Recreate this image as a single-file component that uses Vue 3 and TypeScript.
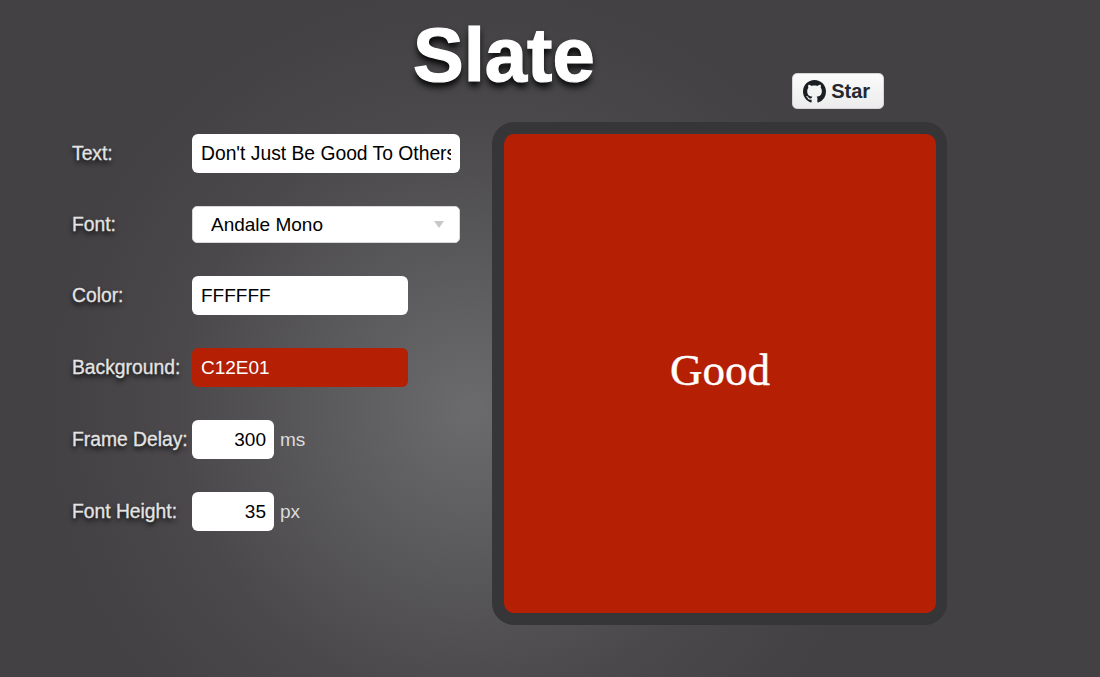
<script setup lang="ts">
import { ref } from 'vue'

const text = ref("Don't Just Be Good To Others")
const font = ref('Andale Mono')
const color = ref('FFFFFF')
const background = ref('C12E01')
const delay = ref(300)
const fontHeight = ref(35)
</script>

<template>
  <div class="page">
    <header class="top">
      <h1 class="title">Slate</h1>
      <a class="star" href="#">
        <svg class="mark" viewBox="0 0 16 16" aria-hidden="true">
          <path fill="#1b1f23" d="M8 0C3.58 0 0 3.58 0 8c0 3.54 2.29 6.53 5.47 7.59.4.07.55-.17.55-.38 0-.19-.01-.82-.01-1.49-2.01.37-2.53-.49-2.69-.94-.09-.23-.48-.94-.82-1.13-.28-.15-.68-.52-.01-.53.63-.01 1.08.58 1.23.82.72 1.21 1.87.87 2.33.66.07-.52.28-.87.51-1.07-1.78-.2-3.64-.89-3.64-3.95 0-.87.31-1.59.82-2.15-.08-.2-.36-1.02.08-2.12 0 0 .67-.21 2.2.82.64-.18 1.32-.27 2-.27.68 0 1.36.09 2 .27 1.53-1.04 2.2-.82 2.2-.82.44 1.1.16 1.92.08 2.12.51.56.82 1.27.82 2.15 0 3.07-1.87 3.75-3.65 3.95.29.25.54.73.54 1.48 0 1.07-.01 1.93-.01 2.2 0 .21.15.46.55.38A8.013 8.013 0 0016 8c0-4.42-3.58-8-8-8z" />
        </svg>
        <span>Star</span>
      </a>
    </header>

    <main class="content">
      <form class="form" @submit.prevent>
        <div class="row">
          <label class="label" for="f-text">Text:</label>
          <input id="f-text" v-model="text" class="field wide" type="text" />
        </div>
        <div class="row">
          <label class="label" for="f-font">Font:</label>
          <div class="select-wrap">
            <select id="f-font" v-model="font" class="select">
              <option>Andale Mono</option>
            </select>
          </div>
        </div>
        <div class="row">
          <label class="label" for="f-color">Color:</label>
          <input id="f-color" v-model="color" class="field medium" type="text" />
        </div>
        <div class="row">
          <label class="label" for="f-bg">Background:</label>
          <input id="f-bg" v-model="background" class="field medium swatch" type="text" />
        </div>
        <div class="row">
          <label class="label" for="f-delay">Frame Delay:</label>
          <input id="f-delay" v-model="delay" class="field small" type="text" />
          <span class="unit">ms</span>
        </div>
        <div class="row">
          <label class="label" for="f-height">Font Height:</label>
          <input id="f-height" v-model="fontHeight" class="field small" type="text" />
          <span class="unit">px</span>
        </div>
      </form>

      <section class="frame">
        <div class="slide">Good</div>
      </section>
    </main>
  </div>
</template>

<style>
html, body { margin: 0; padding: 0; }
</style>

<style scoped>
.page {
  width: 1100px;
  height: 677px;
  overflow: hidden;
  box-sizing: border-box;
  font-family: "Liberation Sans", Arial, sans-serif;
  background: radial-gradient(circle 420px at 470px 410px, #6b6a6d 0%, #5a595c 35%, #4a484b 70%, #434144 100%);
}
.top {
  height: 122px;
  display: flex;
  align-items: flex-start;
  padding-left: 413px;
  box-sizing: border-box;
}
.title {
  margin: 0;
  padding-top: 11px;
  font-size: 76px;
  line-height: 87px;
  font-weight: 700;
  color: #fff;
  -webkit-text-stroke: 1.2px #fff;
  text-shadow: 0 5px 7px #000;
}
.star {
  margin: 73px 0 0 197px;
  width: 92px;
  height: 36px;
  box-sizing: border-box;
  display: flex;
  align-items: center;
  justify-content: center;
  gap: 5px;
  border-radius: 5px;
  border: 1px solid #d4d4d5;
  background: linear-gradient(#fbfbfb, #ececed);
  color: #24292f;
  font-size: 20px;
  font-weight: 700;
  text-decoration: none;
}
.mark { width: 23px; height: 23px; display: block; margin-left: -2px; }
.content {
  display: flex;
  align-items: flex-start;
  padding-left: 72px;
  gap: 32px;
}
.form {
  width: 388px;
  padding-top: 12px;
  display: flex;
  flex-direction: column;
  gap: 33px;
}
.row { display: flex; align-items: center; }
.label {
  width: 120px;
  flex: none;
  font-size: 19.3px;
  color: #e4e4e4;
  -webkit-text-stroke: 0.3px #e4e4e4;
  text-shadow: 0 3px 5px #000;
  white-space: nowrap;
}
.field {
  height: 39px;
  box-sizing: border-box;
  border: 0;
  outline: 0;
  border-radius: 6px;
  padding: 0 9px;
  margin: 0;
  background: #fff;
  color: #000;
  font: 19px "Liberation Sans", Arial, sans-serif;
}
.wide { width: 268px; font-size: 19.3px; }
.medium { width: 216px; }
.small { width: 82px; text-align: right; padding-right: 8px; }
.swatch { background: #b51f04; color: #fff; }
.unit {
  margin-left: 6px;
  font-size: 19px;
  color: #dcdcdc;
}
.select-wrap {
  position: relative;
  width: 268px;
  height: 37px;
}
.select-wrap::after {
  content: "";
  position: absolute;
  right: 16px;
  top: 15px;
  border-left: 5.5px solid transparent;
  border-right: 5.5px solid transparent;
  border-top: 7px solid #c8c8c8;
  pointer-events: none;
}
.select {
  appearance: none;
  width: 100%;
  height: 100%;
  box-sizing: border-box;
  border: 1px solid #d8d8d8;
  outline: 0;
  border-radius: 5px;
  padding: 0 18px;
  background: #fff;
  color: #000;
  font: 19px "Liberation Sans", Arial, sans-serif;
}
.frame {
  width: 455px;
  height: 503px;
  box-sizing: border-box;
  border-radius: 22px;
  padding: 12px 11px 12px 12px;
  background: #363538;
}
.slide {
  height: 100%;
  box-sizing: border-box;
  padding-bottom: 8px;
  border-radius: 10px;
  background: #b51f04;
  color: #fff;
  display: flex;
  align-items: center;
  justify-content: center;
  font-family: "Liberation Serif", Georgia, serif;
  font-size: 45px;
  -webkit-text-stroke: 0.4px #fff;
}
</style>
